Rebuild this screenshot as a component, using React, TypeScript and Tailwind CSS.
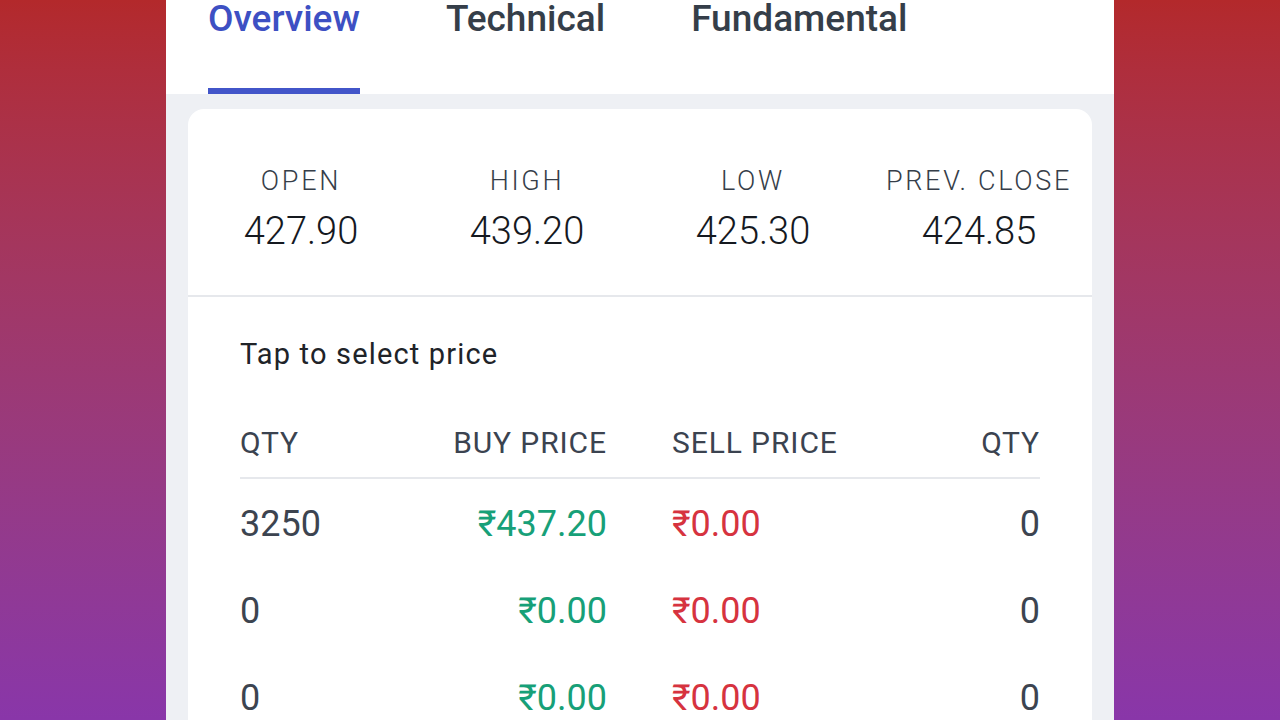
const stats = [
  { label: "OPEN", value: "427.90" },
  { label: "HIGH", value: "439.20" },
  { label: "LOW", value: "425.30" },
  { label: "PREV. CLOSE", value: "424.85" },
];

const depth = [
  { bidQty: "3250", bid: "₹437.20", ask: "₹0.00", askQty: "0" },
  { bidQty: "0", bid: "₹0.00", ask: "₹0.00", askQty: "0" },
  { bidQty: "0", bid: "₹0.00", ask: "₹0.00", askQty: "0" },
  { bidQty: "0", bid: "₹0.00", ask: "₹0.00", askQty: "0" },
];

const tabs = ["Overview", "Technical", "Fundamental"];

export default function App() {
  return (
    <div
      className="h-screen w-full overflow-hidden bg-gradient-to-b from-[#b3292b] to-[#8936a9] flex justify-center"
      style={{ fontFamily: "Roboto, 'Noto Sans', sans-serif" }}
    >
      <div className="w-[948px] h-full bg-[#eef0f4] flex flex-col">
        {/* tabs */}
        <div className="h-[94px] bg-white flex gap-[86px] pl-[42px] shrink-0">
          {tabs.map((t, i) => (
            <div key={t} className="flex flex-col justify-between h-full">
              <span
                className={
                  i === 0
                    ? "text-[37px] leading-none font-medium text-[#3d50c3]"
                    : "text-[37px] leading-none font-medium text-[#353e49]"
                }
              >
                {t}
              </span>
              {i === 0 ? (
                <div className="h-[6px] bg-[#4255c9]" />
              ) : (
                <div className="h-[6px]" />
              )}
            </div>
          ))}
        </div>

        <div className="px-[22px] pt-[15px]">
          <div className="bg-white rounded-t-[16px]">
            {/* OHLC */}
            <div className="grid grid-cols-4 pt-[59px] pb-[45px] border-b-2 border-[#e6e8ec]">
              {stats.map((s) => (
                <div key={s.label} className="flex flex-col items-center">
                  <span className="text-[27px] leading-none tracking-[0.1em] text-[#363e49] font-light">
                    {s.label}
                  </span>
                  <span className="mt-[17px] text-[38px] leading-none font-light text-[#15191f]">
                    {s.value}
                  </span>
                </div>
              ))}
            </div>

            {/* market depth */}
            <div className="px-[52px] pt-[43px] pb-10">
              <p className="text-[29px] leading-none tracking-[0.04em] text-[#202328]">
                Tap to select price
              </p>

              <div className="mt-[59px] grid grid-cols-2 pb-[19px] border-b-2 border-[#e6e8ec] text-[30px] leading-none tracking-[0.03em] text-[#3b4350]">
                <div className="flex justify-between pr-[33px]">
                  <span>QTY</span>
                  <span>BUY PRICE</span>
                </div>
                <div className="flex justify-between pl-[32px]">
                  <span>SELL PRICE</span>
                  <span>QTY</span>
                </div>
              </div>

              {depth.map((r, i) => (
                <div key={i} className="grid grid-cols-2 h-[87px] pt-[27px] text-[36px] leading-none">
                  <div className="flex justify-between pr-[33px]">
                    <span className="text-[#3c4450]">{r.bidQty}</span>
                    <span className="text-[#17a078]">{r.bid}</span>
                  </div>
                  <div className="flex justify-between pl-[32px]">
                    <span className="text-[#d6333f]">{r.ask}</span>
                    <span className="text-[#3c4450]">{r.askQty}</span>
                  </div>
                </div>
              ))}
            </div>
          </div>
        </div>
      </div>
    </div>
  );
}
